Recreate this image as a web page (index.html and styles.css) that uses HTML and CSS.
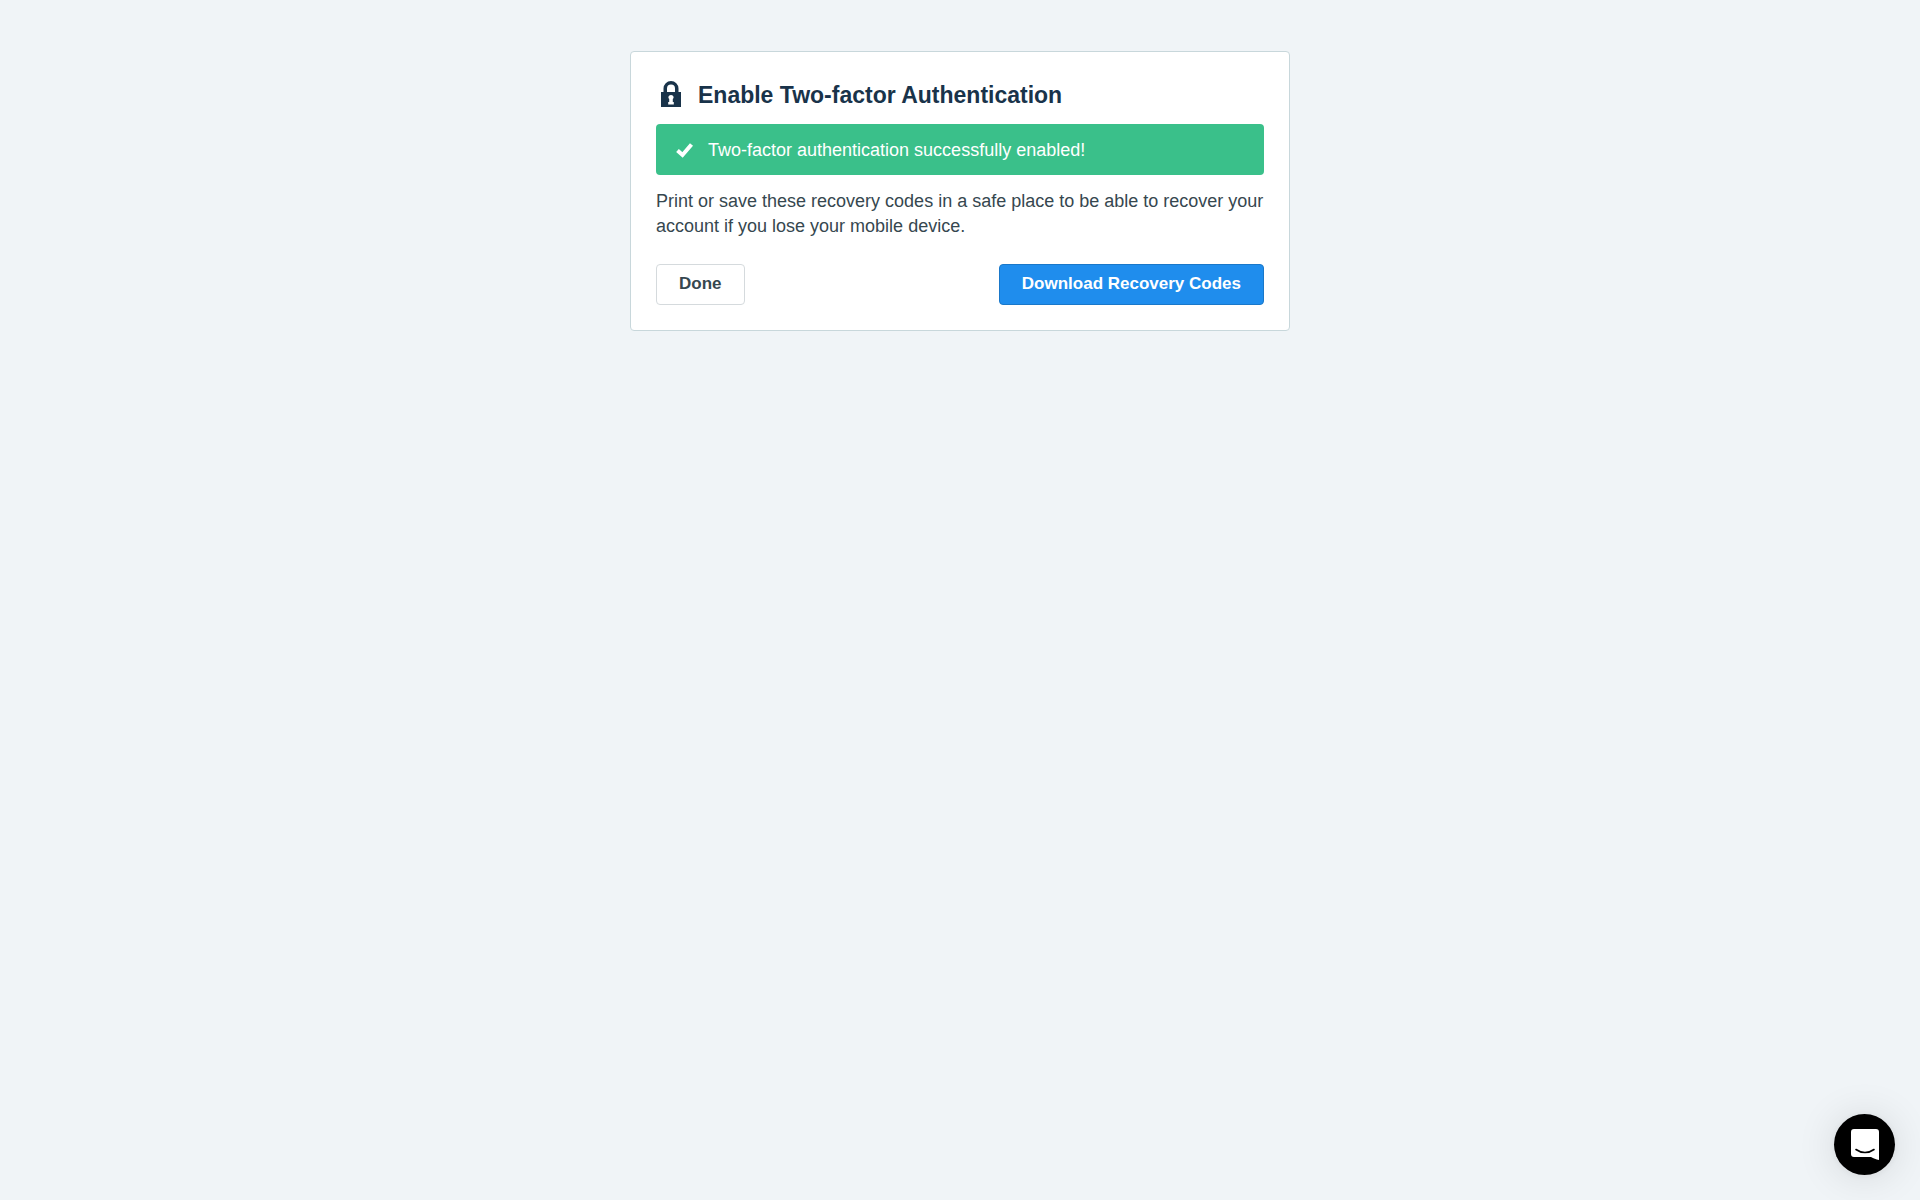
FILE: index.html
```html
<!DOCTYPE html>
<html lang="en">

<head>
    <meta charset="UTF-8">
    <meta name="viewport" content="width=device-width, initial-scale=1.0">
    <title>Enable Two-factor Authentication</title>
    <link rel="stylesheet" href="styles.css">
</head>

<body>

    <main class="card">
        <h1 class="card-title">
            <svg class="icon-lock" viewBox="0 0 20 26" aria-hidden="true">
                <path fill-rule="evenodd" d="M0 11h2.500V7.500a7.500 7.500 0 0 1 15 0V11H20v15H0V11zm6 0h8V7.500a4 4 0 0 0-8 0V11zm4 3a2.600 2.600 0 0 0-2.600 2.600c0 .6.300 1.100.8 1.500V21h-1v2.500h5.600V21h-1v-2.900c.5-.4.800-.9.800-1.500A2.600 2.600 0 0 0 10 14z" />
            </svg>
            Enable Two-factor Authentication
        </h1>
        <div class="alert" role="status">
            <svg class="icon-check" viewBox="0 0 17 15" aria-hidden="true">
                <path d="M1.500 7.500L6.500 12L15.500 1.500" />
            </svg>
            Two-factor authentication successfully enabled!
        </div>
        <p class="card-text">Print or save these recovery codes in a safe place to be able to recover your account if you lose your mobile device.</p>
        <div class="card-actions">
            <button class="btn" type="button">Done</button>
            <button class="btn btn-primary" type="button">Download Recovery Codes</button>
        </div>
    </main>

    <button class="chat-launcher" type="button" aria-label="Open chat">
        <svg class="icon-chat" viewBox="0 0 28 31" aria-hidden="true">
            <path fill="#fff" d="M3 0h22a3 3 0 0 1 3 3v28c-3-.5-5.500-1.600-8-3H3a3 3 0 0 1-3-3V3a3 3 0 0 1 3-3z" />
            <path fill="none" stroke="#000" stroke-width="1.600" stroke-linecap="round" d="M5 20.500c5.500 4 12.500 4 18 0" />
        </svg>
    </button>

</body>

</html>
```

FILE: styles.css
```css
* {
    box-sizing: border-box;
}

body {
    margin: 0;
    padding: 51px 20px;
    background-color: #f0f4f7;
    color: #36474f;
    font-family: "Liberation Sans", Arial, sans-serif;
    font-size: 18px;
    line-height: 25px;
}

.card {
    max-width: 660px;
    margin: 0 auto;
    padding: 25px;
    background-color: #fff;
    border: 1px solid #c8d7db;
    border-radius: 4px;
}

.card-title {
    display: flex;
    align-items: flex-start;
    gap: 17px;
    margin: 0 0 10px;
    padding-left: 5px;
    color: #19334a;
    font-size: 23px;
    line-height: 37px;
}

.icon-lock {
    width: 20px;
    height: 26px;
    margin-top: 4px;
    fill: currentColor;
}

.alert {
    display: flex;
    align-items: center;
    gap: 15px;
    padding: 14px 20px 12px;
    background-color: #3ac08a;
    border-radius: 4px;
    color: #fff;
}

.icon-check {
    width: 17px;
    height: 15px;
    overflow: visible;
    fill: none;
    stroke: currentColor;
    stroke-width: 4;
}

.card-text {
    margin: 14px 0 25px;
}

.card-actions {
    display: flex;
    justify-content: space-between;
}

.btn {
    padding: 7px 22px 8px;
    background-color: #fff;
    border: 1px solid #d5dadd;
    border-radius: 4px;
    color: #36474f;
    font-family: inherit;
    font-size: 17px;
    font-weight: bold;
    line-height: 24px;
    cursor: pointer;
}

.btn-primary {
    background-color: #1f8ded;
    border-color: #1a78c9;
    color: #fff;
}

.chat-launcher {
    position: fixed;
    right: 25px;
    bottom: 25px;
    display: flex;
    align-items: center;
    justify-content: center;
    width: 61px;
    height: 61px;
    padding: 0;
    background-color: #000;
    border: 0;
    border-radius: 50%;
    box-shadow: 0 1px 8px rgba(0, 0, 0, 0.06), 0 2px 40px rgba(0, 0, 0, 0.12);
    cursor: pointer;
}

.icon-chat {
    width: 28px;
    height: 31px;
}
```
